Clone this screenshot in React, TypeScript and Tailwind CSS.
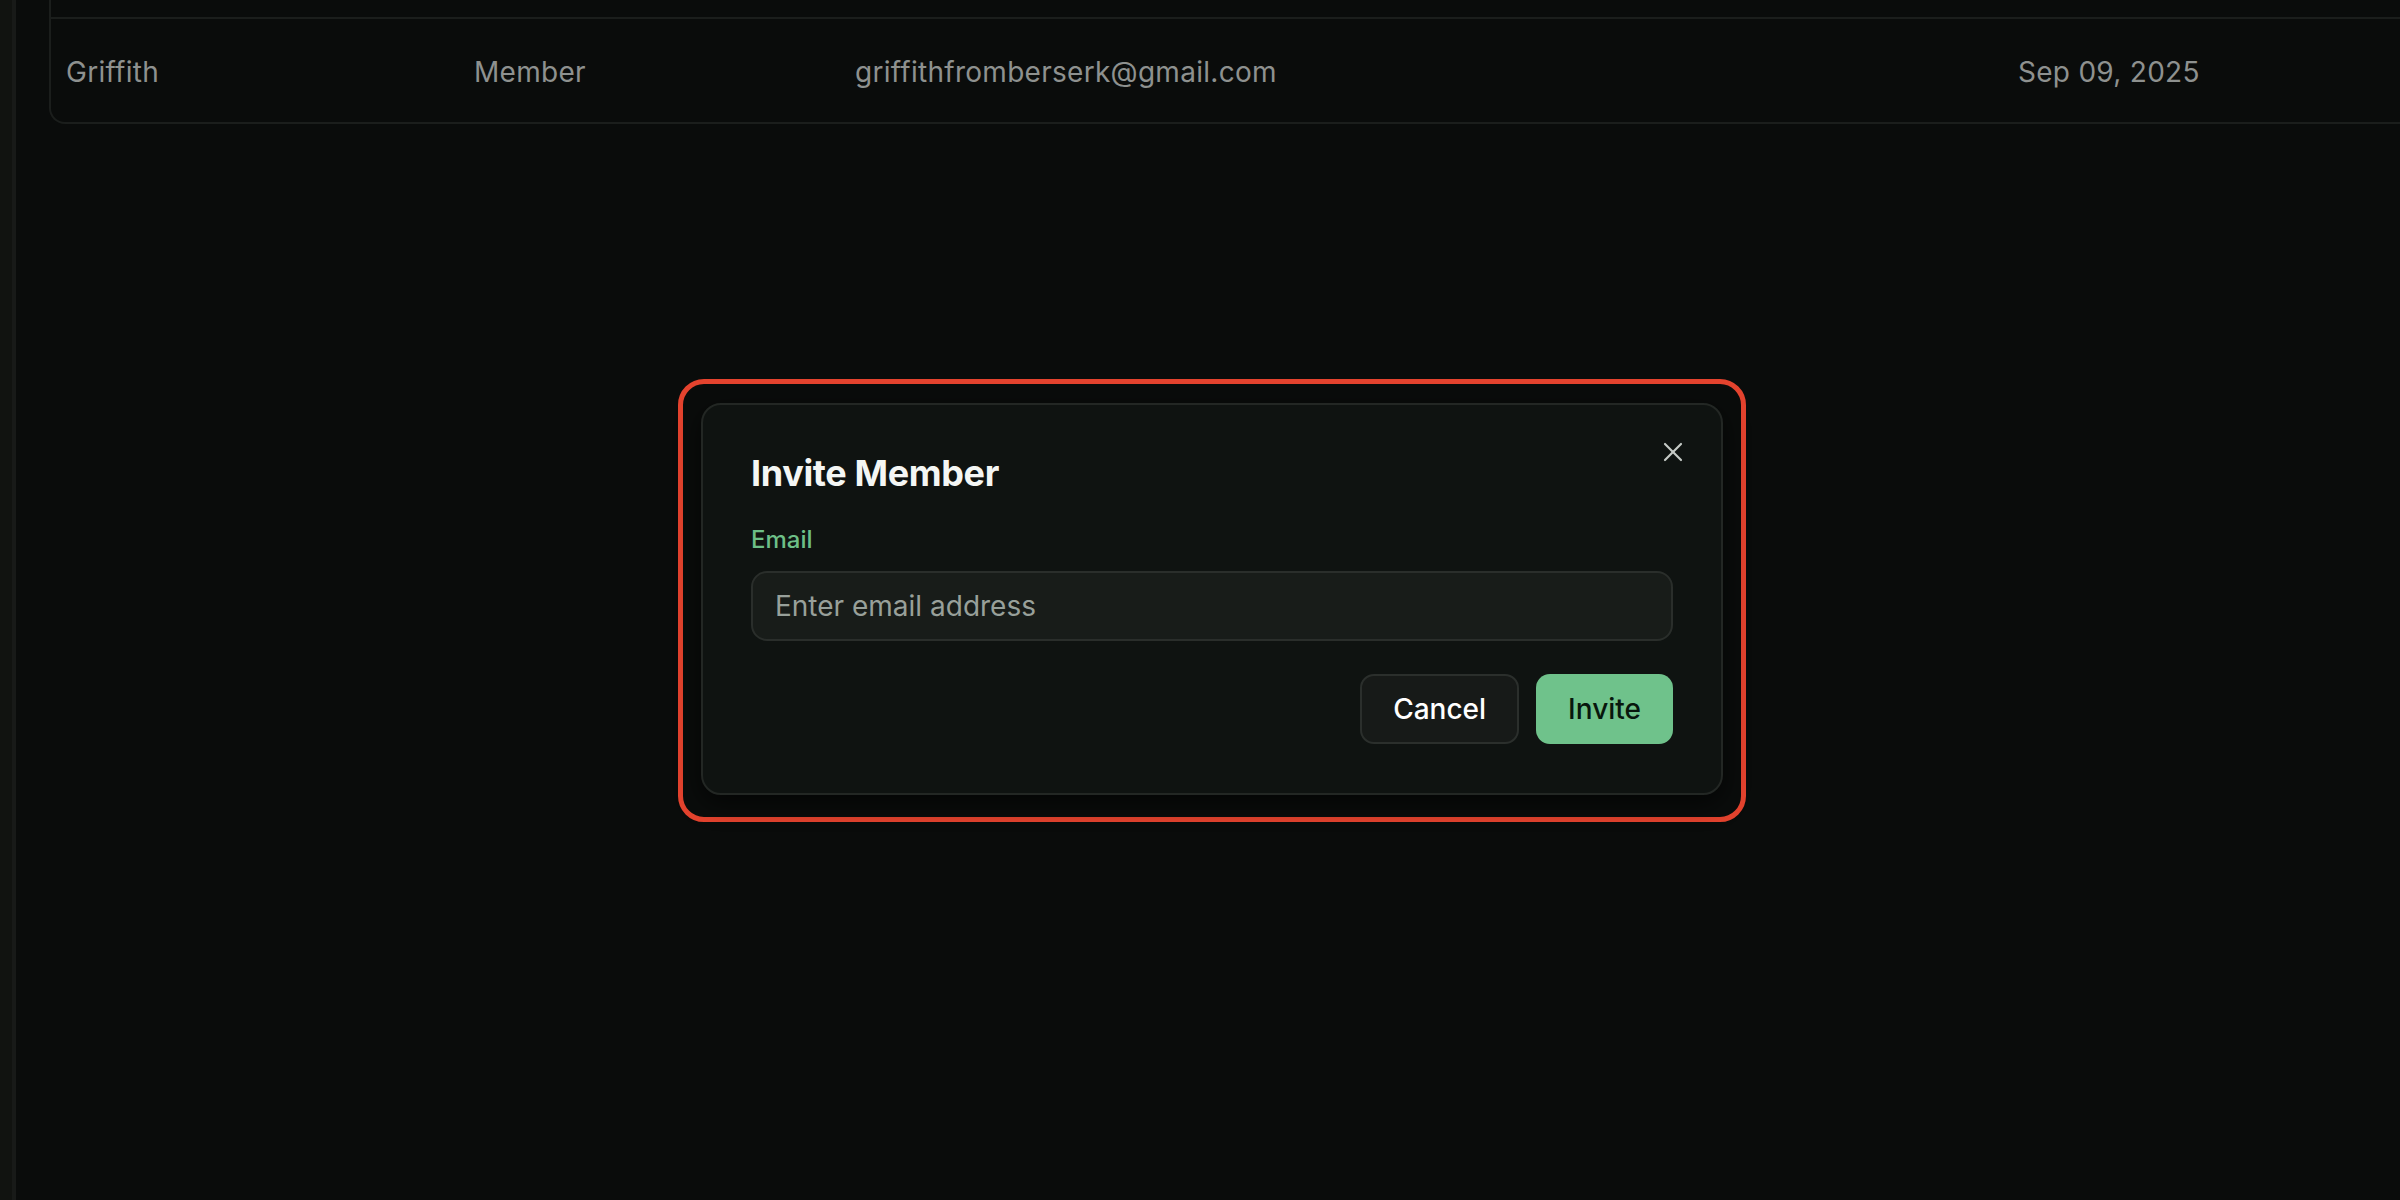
import React from "react";
import { X } from "lucide-react";

export default function App() {
  return (
    <div className="relative h-[1200px] w-[2400px] overflow-hidden bg-[#0a0c0b] font-['Inter',sans-serif]">
      <div className="flex h-full">
        <aside className="w-[16px] shrink-0 border-r-[4px] border-[#181a18] bg-[#111310]" />
        <main className="flex-1 pl-[33px]">
          <div className="w-[2400px] rounded-bl-[16px] border-b-2 border-l-2 border-[#1b1e1c]">
            <div className="h-[17px]" />
            <div className="flex h-[105px] items-center border-t-2 border-[#1b1e1c] pt-[2px] text-[28px] tracking-[0.01em] text-[#8e918f]">
              <div className="w-[408px] shrink-0 pl-[15px]">Griffith</div>
              <div className="w-[381px] shrink-0 pl-[15px]">Member</div>
              <div className="w-[1163px] shrink-0 pl-[15px]">griffithfromberserk@gmail.com</div>
              <div className="shrink-0 pl-[15px]">Sep 09, 2025</div>
            </div>
          </div>
        </main>
      </div>

      <div className="absolute inset-0 flex items-center justify-center pl-[24px]">
        <div className="rounded-[26px] border-[5px] border-[#e4432e] px-[18px] pb-[22px] pt-[19px]">
          <div className="relative w-[1022px] rounded-[20px] border-2 border-[#232724] bg-[#0f1311] px-[48px] pb-[49px] pt-[48px] shadow-[0_8px_24px_rgba(0,0,0,0.6)]">
            <button className="absolute right-[32px] top-[31px] text-[#c5cac6]">
              <X size={32} strokeWidth={1.6} />
            </button>
            <h2 className="text-[36px] font-bold leading-[40px] tracking-[-0.01em] text-[#f4f6f4]">
              Invite Member
            </h2>
            <label className="mt-[31px] block text-[24px] font-medium leading-[32px] text-[#6dbf87]">
              Email
            </label>
            <input
              className="mt-[15px] block h-[70px] w-full rounded-[16px] border-2 border-[#2a2e2b] bg-[#181c19] px-[22px] text-[28px] text-white outline-none placeholder:text-[#98a09a]"
              placeholder="Enter email address"
            />
            <div className="mt-[33px] flex justify-end gap-[17px]">
              <button className="h-[70px] rounded-[14px] border-2 border-[#2b2f2c] bg-[#171a18] px-[31px] text-[28px] font-medium text-white">
                Cancel
              </button>
              <button className="h-[70px] rounded-[14px] bg-[#6fc28b] px-[32px] text-[28px] font-medium text-[#08170d]">
                Invite
              </button>
            </div>
          </div>
        </div>
      </div>
    </div>
  );
}
